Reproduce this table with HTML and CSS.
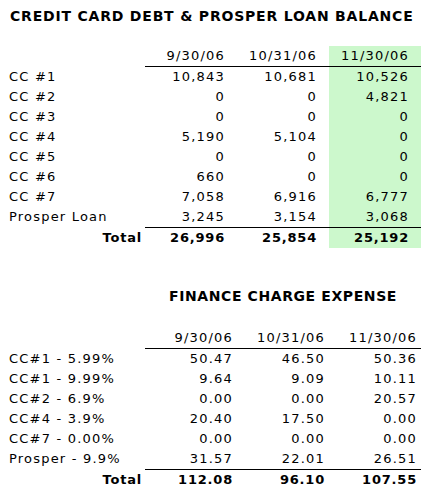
FILE: index.html
```html
<!DOCTYPE html>
<html>
<head>
<meta charset="utf-8">
<title>Debt</title>
<link rel="stylesheet" href="styles.css">
</head>
<body>
    <h1 class="title">CREDIT CARD DEBT &amp; PROSPER LOAN BALANCE</h1>
    <table class="sheet debt">
        <colgroup><col class="c-label"><col class="c-num"><col class="c-num"><col class="c-num"></colgroup>
        <tr class="head">
            <td class="label"></td><td>9/30/06</td><td>10/31/06</td><td class="hl">11/30/06</td>
        </tr>
        <tr><td class="label">CC #1</td><td>10,843</td><td>10,681</td><td class="hl">10,526</td></tr>
        <tr><td class="label">CC #2</td><td>0</td><td>0</td><td class="hl">4,821</td></tr>
        <tr><td class="label">CC #3</td><td>0</td><td>0</td><td class="hl">0</td></tr>
        <tr><td class="label">CC #4</td><td>5,190</td><td>5,104</td><td class="hl">0</td></tr>
        <tr><td class="label">CC #5</td><td>0</td><td>0</td><td class="hl">0</td></tr>
        <tr><td class="label">CC #6</td><td>660</td><td>0</td><td class="hl">0</td></tr>
        <tr><td class="label">CC #7</td><td>7,058</td><td>6,916</td><td class="hl">6,777</td></tr>
        <tr><td class="label">Prosper Loan</td><td>3,245</td><td>3,154</td><td class="hl">3,068</td></tr>
        <tr class="total"><td class="label">Total</td><td>26,996</td><td>25,854</td><td class="hl">25,192</td></tr>
    </table>

    <table class="sheet finance">
        <colgroup><col class="c-label"><col class="c-num"><col class="c-num"><col class="c-num"></colgroup>
        <tr class="caption"><td class="label"></td><td colspan="3">FINANCE CHARGE EXPENSE</td></tr>
        <tr class="head">
            <td class="label"></td><td>9/30/06</td><td>10/31/06</td><td>11/30/06</td>
        </tr>
        <tr><td class="label">CC#1 - 5.99%</td><td>50.47</td><td>46.50</td><td>50.36</td></tr>
        <tr><td class="label">CC#1 - 9.99%</td><td>9.64</td><td>9.09</td><td>10.11</td></tr>
        <tr><td class="label">CC#2 - 6.9%</td><td>0.00</td><td>0.00</td><td>20.57</td></tr>
        <tr><td class="label">CC#4 - 3.9%</td><td>20.40</td><td>17.50</td><td>0.00</td></tr>
        <tr><td class="label">CC#7 - 0.00%</td><td>0.00</td><td>0.00</td><td>0.00</td></tr>
        <tr><td class="label">Prosper - 9.9%</td><td>31.57</td><td>22.01</td><td>26.51</td></tr>
        <tr class="total"><td class="label">Total</td><td>112.08</td><td>96.10</td><td>107.55</td></tr>
    </table>
</body>
</html>
```

FILE: styles.css
```css
body {
    margin: 0;
    background: #ffffff;
    color: #000000;
    font-family: "DejaVu Sans", Verdana, sans-serif;
    font-size: 13px;
    letter-spacing: 1.2px;
}

.title {
    margin: 0;
    padding: 8px 0 0 10px;
    height: 38px;
    box-sizing: border-box;
    font-size: 14px;
    line-height: 16px;
    font-weight: bold;
    letter-spacing: 0.8px;
    white-space: nowrap;
}

.sheet {
    border-collapse: collapse;
    table-layout: fixed;
    width: 421px;
    margin-top: 8px;
}

.c-label {
    width: 145px;
}

.c-num {
    width: 92px;
}

.sheet td {
    height: 20px;
    padding: 0;
    line-height: 20px;
    text-align: right;
    white-space: nowrap;
    box-sizing: border-box;
}

.sheet td.label {
    padding-left: 9px;
    text-align: left;
}

.debt td {
    padding-right: 12px;
}

.finance td {
    padding-right: 4px;
}

.head td:not(.label) {
    border-bottom: 1px solid #000;
}

.total td:not(.label) {
    border-top: 1px solid #000;
}

.total td {
    font-weight: bold;
    letter-spacing: 0.8px;
}

.sheet .total td.label {
    text-align: right;
    padding-right: 3px;
}

.hl {
    background: #ccf8cc;
}

.finance {
    margin-top: 38px;
}

.finance .caption td {
    height: 42px;
    line-height: 20px;
    vertical-align: top;
    text-align: center;
    padding: 0;
    font-size: 14px;
    font-weight: bold;
    letter-spacing: 0.6px;
}
```
